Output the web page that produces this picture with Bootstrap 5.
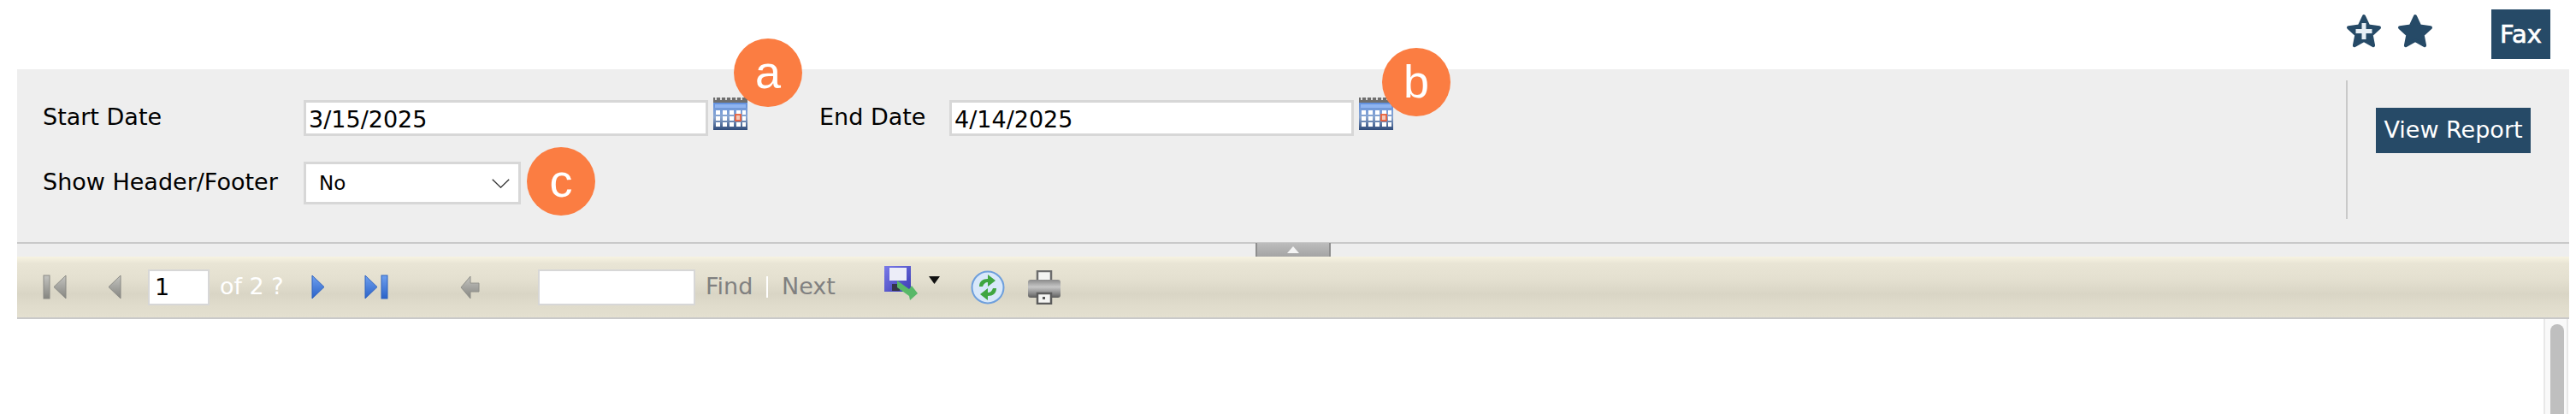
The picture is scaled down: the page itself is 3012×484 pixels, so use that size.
<!DOCTYPE html>
<html lang="en">
<head>
<meta charset="UTF-8">
<title>Report Viewer</title>
<link href="https://cdn.jsdelivr.net/npm/bootstrap@5.3.0/dist/css/bootstrap.min.css" rel="stylesheet">
<style>
    html, body { height: 484px; overflow: hidden; }
    body { background: #fff; color: #000; font-family: "DejaVu Sans", Verdana, sans-serif; }
    svg { display: block; flex: none; }
    .sprite-defs { position: absolute; width: 0; height: 0; }
    .top-bar { height: 81px; padding-right: 30px; }
    .star-one { margin-top: -10px; }
    .star-two { margin-top: -10px; margin-left: 18px; margin-right: 68px; }
    .fax-btn { width: 69px; height: 58px; margin-top: -1px; padding: 0; border: 0; border-radius: 0; background: #264a67; color: #fff; font-size: 29px; line-height: 58px; -webkit-text-stroke: .7px #fff; }
    .param-panel { position: relative; height: 204px; padding-top: 36px; margin: 0 8px 0 20px; background: #eee; border-bottom: 2px solid #c9c9c9; }
    .param-row { height: 42px; font-size: 27px; }
    .second-row { height: 50px; margin-top: 30px; }
    .param-label { width: 335px; padding-left: 30px; flex: none; margin-top: -2px; }
    .end-label { width: 152px; margin-left: 84px; flex: none; margin-top: -2px; }
    .date-box { width: 473px; height: 42px; padding: 2px 3px 0; border: 3px solid #d7d7d7; border-radius: 0; font-size: 27px; color: #000; }
    .cal-icon { margin: -10px 0 0 6px; }
    .yes-no { width: 254px; height: 50px; padding: 0 10px 0 15px; border: 3px solid #d7d7d7; border-radius: 0; font-size: 23px; color: #000;
        background-size: 23px 11px; background-position: right 9px center;
        background-image: url("data:image/svg+xml,%3csvg xmlns='http://www.w3.org/2000/svg' viewBox='0 0 25 13'%3e%3cpath fill='none' stroke='%23333' stroke-width='1.6' d='M1 1l11.500 11L24 1'/%3e%3c/svg%3e"); }
    .side-rule { position: absolute; top: 13px; left: 2723px; width: 2px; height: 162px; background: #c9c9c9; }
    .view-btn { position: absolute; top: 45px; left: 2758px; width: 181px; height: 53px; padding: 0; border: 0; border-radius: 0; background: #264a67; color: #fff; font-size: 27px; white-space: nowrap; }
    .mark-dot { position: absolute; width: 80px; height: 80px; display: flex; align-items: center; justify-content: center; border-radius: 50%; background: #fb7d42; color: #fff; font-family: "Liberation Sans", Arial, sans-serif; font-size: 54px; line-height: 1; z-index: 2; padding-bottom: 3px; }
    .dot-a { left: 838px; top: -36px; }
    .dot-b { left: 1596px; top: -25px; }
    .dot-c { left: 596px; top: 91px; }
    .pad-strip { position: relative; height: 15px; margin: 0 8px 0 20px; background: #eee; }
    .collapse-tab { position: absolute; left: 1448px; top: -1px; width: 88px; height: 16px; background: linear-gradient(#bcbcbc, #a4a4a4); border-left: 2px solid #8e8e8e; border-right: 2px solid #8e8e8e; display: flex; align-items: center; justify-content: center; }
    .collapse-tab span { width: 0; height: 0; border: 7px solid transparent; border-top: 0; border-bottom: 8px solid #f4f4f4; }
    .tool-bar { height: 73px; margin: 0 8px 0 20px; border-bottom: 2px solid #c9c9c9; background: linear-gradient(#f7f3e1 0, #e9e5d5 8px, #e4e0d0 26px, #d9d5c5 44px, #e0dccc 58px, #e4e0d0 100%); color: #808080; font-size: 27px; white-space: nowrap; }
    .page-box { width: 72px; height: 42px; margin-left: 31px; padding: 0 6px; border: 2px solid #d7d7d7; border-radius: 0; font-size: 27px; color: #000; }
    .find-box { width: 184px; height: 42px; margin-left: 68px; padding: 0 6px; border: 2px solid #d7d7d7; border-radius: 0; }
    .of-text { width: 80px; margin-left: 12px; color: #fff; }
    .find-link { width: 54px; margin-left: 12px; }
    .next-link { width: 60px; margin-left: 16px; }
    .sep-bar { width: 2px; height: 25px; margin-left: 17px; background: #fff; }
    .i-first { margin-left: 30px; }
    .i-prev { margin-left: 48px; }
    .i-next { margin-left: 27px; }
    .i-last { margin-left: 46px; }
    .i-back { margin-left: 84px; }
    .i-save { margin: -10px 0 0 60px; }
    .i-drop { margin: -16px 0 0 12px; }
    .i-sync { margin-left: 36px; }
    .i-print { margin-left: 26px; }
    .report-area { position: relative; height: 111px; margin: 0 8px 0 20px; overflow: hidden; }
    .scroll-track { position: absolute; top: 0; right: 1px; bottom: 0; width: 29px; background: #f9f9f9; border-left: 2px solid #e8e8e8; border-right: 2px solid #e8e8e8; overflow: hidden; }
    .scroll-thumb { position: absolute; top: 6px; left: 6px; width: 16px; height: 140px; border-radius: 8px; background: #bfbfbf; }
</style>
</head>
<body>
    <svg class="sprite-defs">
        <defs>
            <filter id="soft"><feGaussianBlur stdDeviation="0.7"/></filter>
            <linearGradient id="calBody" x1="0" y1="0" x2="0" y2="1"><stop offset="0" stop-color="#5f8fe0"/><stop offset=".55" stop-color="#8aa6d0"/><stop offset="1" stop-color="#2f4a78"/></linearGradient>
            <linearGradient id="greyIcon" x1="0" y1="0" x2="0" y2="1"><stop offset="0" stop-color="#c4c4c0"/><stop offset="1" stop-color="#858580"/></linearGradient>
            <linearGradient id="blueIcon" x1="0" y1="0" x2="0" y2="1"><stop offset="0" stop-color="#6fa0ee"/><stop offset="1" stop-color="#2a62c8"/></linearGradient>
            <linearGradient id="diskBody" x1="0" y1="0" x2="1" y2="1"><stop offset="0" stop-color="#7a7ae8"/><stop offset="1" stop-color="#3c3cb4"/></linearGradient>
            <linearGradient id="printBody" x1="0" y1="0" x2="0" y2="1"><stop offset="0" stop-color="#8a8a8a"/><stop offset=".4" stop-color="#c6c6c6"/><stop offset=".75" stop-color="#8c8c8c"/><stop offset="1" stop-color="#5c5c5c"/></linearGradient>
            <symbol id="cal" viewBox="0 0 40 38">
                <g filter="url(#soft)">
                    <rect y="5" width="40" height="33" fill="url(#calBody)"/>
                    <rect width="40" height="6" fill="#6e6e6e"/>
                    <path d="M3 0v3M9 0v3M15 0v3M21 0v3M27 0v3M33 0v3" stroke="#ddd" stroke-width="2"/>
                    <rect x="2" y="8" width="36" height="4" fill="#8fb4f0"/>
                    <g fill="#fff">
                        <rect x="3" y="15" width="5" height="5"/><rect x="11" y="15" width="5" height="5"/><rect x="19" y="15" width="5" height="5"/><rect x="27" y="15" width="5" height="5"/><rect x="34" y="15" width="4" height="5"/>
                        <rect x="3" y="22" width="5" height="5"/><rect x="11" y="22" width="5" height="5"/><rect x="19" y="22" width="5" height="5"/><rect x="34" y="22" width="4" height="5"/>
                        <rect x="3" y="29" width="5" height="5"/><rect x="11" y="29" width="5" height="5"/><rect x="19" y="29" width="5" height="5"/><rect x="27" y="29" width="5" height="5"/><rect x="34" y="29" width="4" height="5"/>
                    </g>
                    <rect x="26" y="20" width="6" height="7" fill="#f4c8b8" stroke="#e8603a" stroke-width="1.800"/>
                </g>
            </symbol>
            <symbol id="star" viewBox="0 0 42 40">
                <path d="M21 3l5.400 11.600 12.600 1.600-9.300 8.600 2.400 12.400L21 31.100 9.900 37.200l2.400-12.400L3 16.200l12.600-1.600z" fill="#264a67" stroke="#264a67" stroke-width="4" stroke-linejoin="round"/>
            </symbol>
        </defs>
    </svg>

    <div class="top-bar d-flex justify-content-end align-items-center">
        <svg class="star-one" width="42" height="40"><use href="#star"/><path d="M21 11v19M11.500 20.500h19" stroke="#e6eef5" stroke-width="5"/></svg>
        <svg class="star-two" width="42" height="40"><use href="#star"/></svg>
        <button type="button" class="btn fax-btn">Fax</button>
    </div>

    <div class="param-panel">
        <div class="param-row d-flex align-items-center">
            <label class="param-label" for="startDate">Start Date</label>
            <input id="startDate" class="form-control date-box" value="3/15/2025">
            <svg class="cal-icon" width="40" height="38"><use href="#cal"/></svg>
            <label class="end-label" for="endDate">End Date</label>
            <input id="endDate" class="form-control date-box" value="4/14/2025">
            <svg class="cal-icon" width="40" height="38"><use href="#cal"/></svg>
        </div>
        <div class="param-row second-row d-flex align-items-center">
            <label class="param-label" for="showHf">Show Header/Footer</label>
            <select id="showHf" class="form-select yes-no"><option>No</option><option>Yes</option></select>
        </div>
        <div class="side-rule"></div>
        <button type="button" class="btn view-btn">View Report</button>
        <div class="mark-dot dot-a">a</div>
        <div class="mark-dot dot-b">b</div>
        <div class="mark-dot dot-c">c</div>
    </div>
    <div class="pad-strip"><div class="collapse-tab"><span></span></div></div>

    <div class="tool-bar d-flex align-items-center">
        <svg class="i-first" width="28" height="29" viewBox="0 0 28 29"><g filter="url(#soft)" fill="url(#greyIcon)" stroke="#8a8a85"><rect x="1" y="1" width="7" height="27"/><path d="M27 1v27L13 14.500z"/></g></svg>
        <svg class="i-prev" width="16" height="29" viewBox="0 0 16 29"><path filter="url(#soft)" d="M15 1v27L1 14.500z" fill="url(#greyIcon)" stroke="#8a8a85"/></svg>
        <input class="form-control page-box" value="1">
        <span class="of-text">of 2 ?</span>
        <svg class="i-next" width="16" height="29" viewBox="0 0 16 29"><path filter="url(#soft)" d="M1 1v27l14-13.500z" fill="url(#blueIcon)" stroke="#2f62c0"/></svg>
        <svg class="i-last" width="28" height="29" viewBox="0 0 28 29"><g filter="url(#soft)" fill="url(#blueIcon)" stroke="#2f62c0"><path d="M1 1v27l14-13.500z"/><rect x="20" y="1" width="7" height="27"/></g></svg>
        <svg class="i-back" width="23" height="28" viewBox="0 0 23 28"><path filter="url(#soft)" d="M1 14L12 1v8h10v10H12v8z" fill="url(#greyIcon)" stroke="#90908a"/></svg>
        <input class="form-control find-box">
        <span class="find-link">Find</span>
        <span class="sep-bar"></span>
        <span class="next-link">Next</span>
        <svg class="i-save" width="40" height="40" viewBox="0 0 40 40">
            <g filter="url(#soft)">
                <rect x="0" y="0" width="31" height="30" fill="url(#diskBody)"/>
                <rect x="6" y="2" width="20" height="15" fill="#ecedf8"/>
                <rect x="9" y="21" width="9" height="8" fill="#34344a"/>
                <path d="M15 17l14 10 3-4 7 9-9 8-1-5-14-10z" fill="#58b868"/>
            </g>
        </svg>
        <svg class="i-drop" width="13" height="9" viewBox="0 0 13 9"><path d="M0 0h13L6.500 9z" fill="#111"/></svg>
        <svg class="i-sync" width="40" height="40" viewBox="0 0 40 40">
            <g filter="url(#soft)">
                <circle cx="20" cy="20" r="18.500" fill="#d8e8fa" stroke="#6e9fdc" stroke-width="2"/>
                <path d="M10 19c0-6 4-9 10-9V5l9 7-9 7v-5c-3 0-5 2-6 5z" fill="#3fa63f"/>
                <path d="M30 21c0 6-4 9-10 9v5l-9-7 9-7v5c3 0 5-2 6-5z" fill="#3fa63f"/>
            </g>
        </svg>
        <svg class="i-print" width="40" height="40" viewBox="0 0 40 40">
            <g filter="url(#soft)">
                <rect x="12" y="1" width="16" height="14" fill="#f4f4f2" stroke="#6c6c6c" stroke-width="2.500"/>
                <rect x="1" y="11" width="38" height="21" rx="3" fill="url(#printBody)"/>
                <rect x="12" y="27" width="16" height="12" fill="#f4f4f2" stroke="#5c5c5c" stroke-width="2.500"/>
                <rect x="18" y="31" width="3" height="3" fill="#555"/>
            </g>
        </svg>
    </div>

    <div class="report-area">
        <div class="scroll-track"><div class="scroll-thumb"></div></div>
    </div>

<script src="https://cdn.jsdelivr.net/npm/bootstrap@5.3.0/dist/js/bootstrap.bundle.min.js"></script>
</body>
</html>
